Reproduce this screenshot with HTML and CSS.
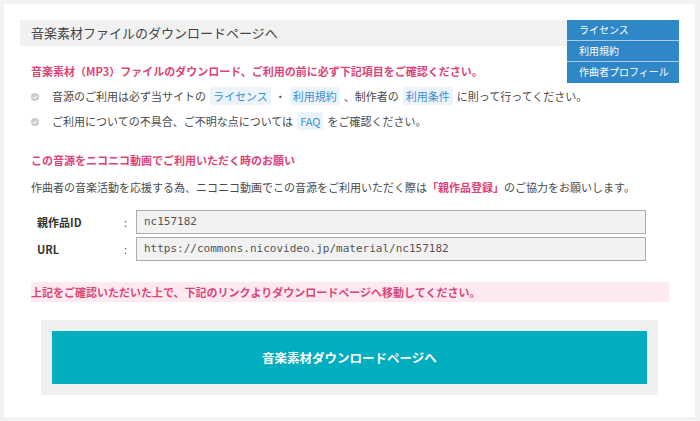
FILE: index.html
```html
<!DOCTYPE html>
<html lang="ja">
<head>
<meta charset="utf-8">
<title>音楽素材ファイルのダウンロードページへ</title>
<link rel="stylesheet" href="styles.css">
</head>
<body>
<div class="panel">
  <div class="title-bar">音楽素材ファイルのダウンロードページへ</div>
  <ul class="menu">
    <li>ライセンス</li>
    <li>利用規約</li>
    <li>作曲者プロフィール</li>
  </ul>
  <div class="content">
    <h2 class="heading first">音楽素材（MP3）ファイルのダウンロード、ご利用の前に必ず下記項目をご確認ください。</h2>
    <ul class="checks">
      <li><svg class="check" viewBox="0 0 8 8" width="8" height="8"><circle cx="4" cy="4" r="4" fill="#cbcbcb"/><path d="M2.2 4.1 L3.5 5.3 L5.9 2.8" stroke="#fff" stroke-width="1.1" fill="none"/></svg><span>音源のご利用は必ず当サイトの<span class="chip">ライセンス</span>・<span class="chip">利用規約</span>、制作者の<span class="chip">利用条件</span>に則って行ってください。</span></li>
      <li><svg class="check" viewBox="0 0 8 8" width="8" height="8"><circle cx="4" cy="4" r="4" fill="#cbcbcb"/><path d="M2.2 4.1 L3.5 5.3 L5.9 2.8" stroke="#fff" stroke-width="1.1" fill="none"/></svg><span>ご利用についての不具合、ご不明な点については<span class="chip">FAQ</span>をご確認ください。</span></li>
    </ul>
    <h2 class="heading second">この音源をニコニコ動画でご利用いただく時のお願い</h2>
    <p class="note">作曲者の音楽活動を応援する為、ニコニコ動画でこの音源をご利用いただく際は<strong class="em">「親作品登録」</strong>のご協力をお願いします。</p>
    <div class="fields">
      <div class="field">
        <span class="label">親作品ID</span>
        <span class="colon">:</span>
        <div class="input">nc157182</div>
      </div>
      <div class="field">
        <span class="label">URL</span>
        <span class="colon">:</span>
        <div class="input">https://commons.nicovideo.jp/material/nc157182</div>
      </div>
    </div>
    <div class="notice">上記をご確認いただいた上で、下記のリンクよりダウンロードページへ移動してください。</div>
    <div class="btn-wrap">
      <div class="btn">音楽素材ダウンロードページへ</div>
    </div>
  </div>
</div>
</body>
</html>
```

FILE: styles.css
```css
* { box-sizing: border-box; }
html, body { margin: 0; }
body {
  background: #f1f2f2;
  padding: 4px 5px 6px 4px;
  font-family: "Noto Sans CJK JP", "Noto Sans", sans-serif;
  color: #4a4a4a;
  font-size: 11px;
}
.panel {
  position: relative;
  background: #fff;
  padding: 16px 16px 22px 16px;
}
.title-bar {
  background: #f1f1f1;
  height: 26px;
  line-height: 26px;
  padding-left: 11px;
  font-size: 13px;
  color: #444;
}
.menu {
  position: absolute;
  top: 16px;
  right: 16px;
  width: 112px;
  margin: 0;
  padding: 0;
  list-style: none;
}
.menu li {
  background: #2f87c8;
  color: #fff;
  font-size: 10px;
  height: 21px;
  line-height: 20px;
  padding-left: 12px;
  white-space: nowrap;
  border-bottom: 1px solid #a9cde8;
}
.menu li:last-child { border-bottom: none; height: 21px; }
.content {
  padding: 0 10px 0 11px;
}
.heading {
  margin: 0;
  font-size: 11px;
  font-weight: bold;
  color: #dc4478;
  line-height: 20px;
}
.heading.first { margin-top: 15px; margin-bottom: 3px; }
.heading.second { margin-top: 16px; }
.checks {
  margin: 0;
  padding: 0;
  list-style: none;
}
.checks li {
  display: flex;
  align-items: center;
  height: 25px;
  line-height: 25px;
}
.check {
  margin-left: 0;
  margin-right: 13px;
  flex: none;
}
.chip {
  display: inline-block;
  background: #ebf4fb;
  color: #3b8fd2;
  line-height: 18px;
  padding: 0 3px;
  margin: 0 4px;
  border-radius: 2px;
}
.note {
  margin: 7px 0 0;
  line-height: 20px;
}
.em { color: #dc4478; }
.fields {
  margin-top: 13px;
  display: flex;
  flex-direction: column;
  gap: 3px;
}
.field {
  display: flex;
  align-items: center;
  padding-left: 6px;
}
.label {
  width: 87px;
  font-weight: bold;
  color: #333;
}
.colon {
  width: 12px;
  color: #555;
}
.input {
  width: 510px;
  height: 24px;
  line-height: 22px;
  border: 1px solid #ababab;
  background: #f2f2f2;
  padding-left: 7px;
  font-family: "DejaVu Sans Mono", "Liberation Mono", monospace;
  font-size: 11px;
  color: #555;
}
.notice {
  margin-top: 21px;
  height: 20px;
  line-height: 20px;
  background: #fde9f0;
  color: #dc4478;
  font-weight: bold;
}
.btn-wrap {
  margin: 18px 11px 0 10px;
  background: #eff1f1;
  padding: 11px;
}
.btn {
  height: 53px;
  background: #00aebf;
  color: #fff;
  font-weight: bold;
  font-size: 12.5px;
  display: flex;
  align-items: center;
  justify-content: center;
}
```
